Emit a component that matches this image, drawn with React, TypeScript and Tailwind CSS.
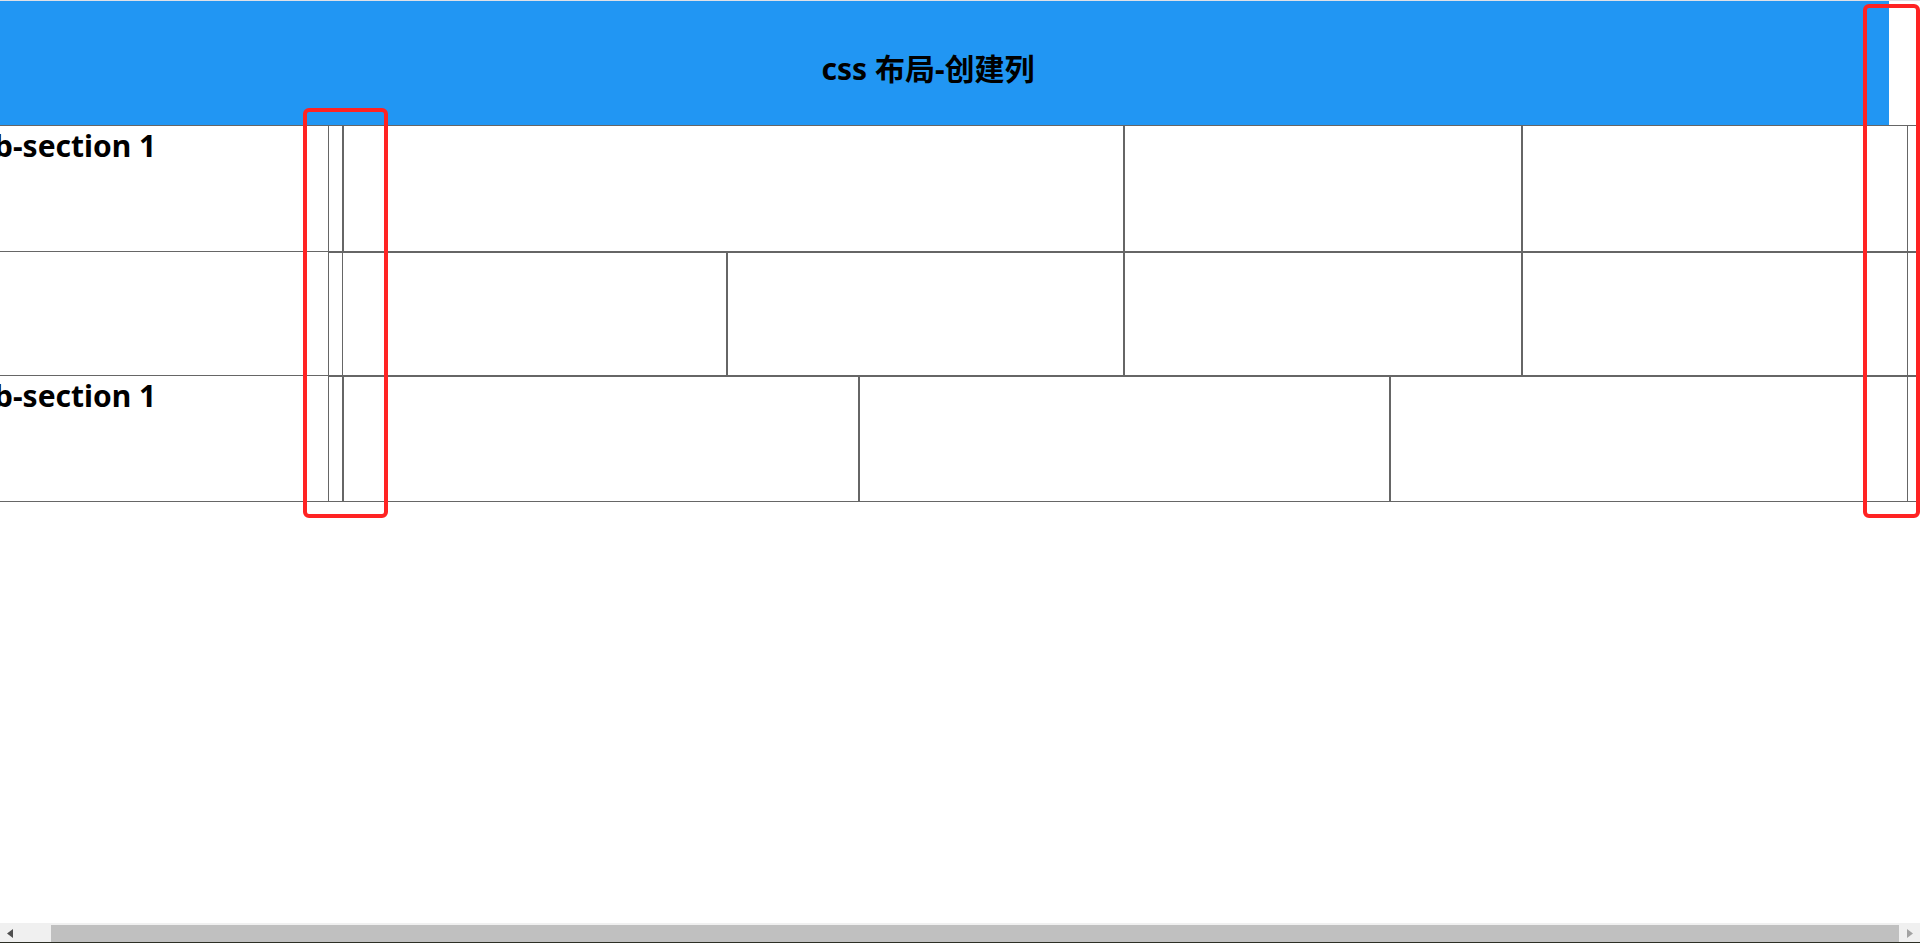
import React from "react";

export default function App() {
  return (
    <div className="relative flex h-[943px] w-[1920px] flex-col overflow-hidden bg-white font-['Noto_Sans','Noto_Sans_CJK_SC',sans-serif] text-black">
      {/* page viewport */}
      <div className="h-[923px] shrink-0 overflow-hidden border-t border-[#dfe0e6]">
        <div className="-ml-[33px] w-[1953px]">
          <header className="flex h-[124px] w-[1922px] items-center justify-center bg-[#2196f3] pt-[11px]">
            <h2 className="whitespace-nowrap text-[30px] font-bold leading-[40px]">css 布局-创建列</h2>
          </header>

          {/* row 1 */}
          <div className="flex h-[127px]">
            <div className="w-[362px] shrink-0 border-y border-r border-[#666]">
              <h2 className="-ml-[9px] whitespace-nowrap text-[30px] font-bold leading-[40px]">Sub-section 1</h2>
            </div>
            <div className="w-[14px] shrink-0 border-y border-r border-[#666]" />
            <div className="w-[782px] shrink-0 border-y border-l border-r-2 border-[#666]" />
            <div className="w-[398px] shrink-0 border-y border-r-2 border-[#666]" />
            <div className="w-[385px] shrink-0 border-y border-r border-[#666]" />
            <div className="flex-1 border-y border-[#666]" />
          </div>

          {/* row 2 */}
          <div className="flex h-[124px]">
            <div className="w-[362px] shrink-0 border-b border-r border-[#666]" />
            <div className="w-[14px] shrink-0 border-y border-r border-[#666]" />
            <div className="w-[385px] shrink-0 border-y border-r-2 border-[#666]" />
            <div className="w-[397px] shrink-0 border-y border-r-2 border-[#666]" />
            <div className="w-[398px] shrink-0 border-y border-r-2 border-[#666]" />
            <div className="w-[385px] shrink-0 border-y border-r border-[#666]" />
            <div className="flex-1 border-y border-[#666]" />
          </div>

          {/* row 3 */}
          <div className="flex h-[126px]">
            <div className="w-[362px] shrink-0 border-b border-r border-[#666]">
              <h2 className="-ml-[9px] whitespace-nowrap text-[30px] font-bold leading-[40px]">Sub-section 1</h2>
            </div>
            <div className="w-[14px] shrink-0 border-y border-r border-[#666]" />
            <div className="w-[517px] shrink-0 border-y border-l border-r-2 border-[#666]" />
            <div className="w-[531px] shrink-0 border-y border-r-2 border-[#666]" />
            <div className="w-[517px] shrink-0 border-y border-r border-[#666]" />
            <div className="flex-1 border-y border-[#666]" />
          </div>
        </div>
      </div>

      {/* horizontal scrollbar */}
      <div className="flex h-[19px] shrink-0 bg-[#f0f0f0]">
        <div className="flex w-[20px] shrink-0 items-center justify-start pl-[7px] pt-[1px]">
          <svg width="6" height="9" viewBox="0 0 6 9">
            <polygon points="6,0 6,9 0,4.5" fill="#4f4f4f" />
          </svg>
        </div>
        <div className="w-[31px] shrink-0" />
        <div className="mt-[2px] h-[17px] w-[1848px] shrink-0 bg-[#c0c0c0]" />
        <div className="flex flex-1 items-center justify-start pl-[8px] pt-[1px]">
          <svg width="6" height="9" viewBox="0 0 6 9">
            <polygon points="0,0 0,9 6,4.5" fill="#a3a3a3" />
          </svg>
        </div>
      </div>
      <div className="h-[1px] shrink-0 bg-[#2c2e25]" />

      {/* red annotation boxes */}
      <div className="pointer-events-none absolute left-[303px] top-[108px] h-[410px] w-[85px] rounded-[6px] border-4 border-[#ff2323]" />
      <div className="pointer-events-none absolute left-[1863px] top-[4px] h-[514px] w-[57px] rounded-[6px] border-4 border-[#ff2323]" />
    </div>
  );
}
